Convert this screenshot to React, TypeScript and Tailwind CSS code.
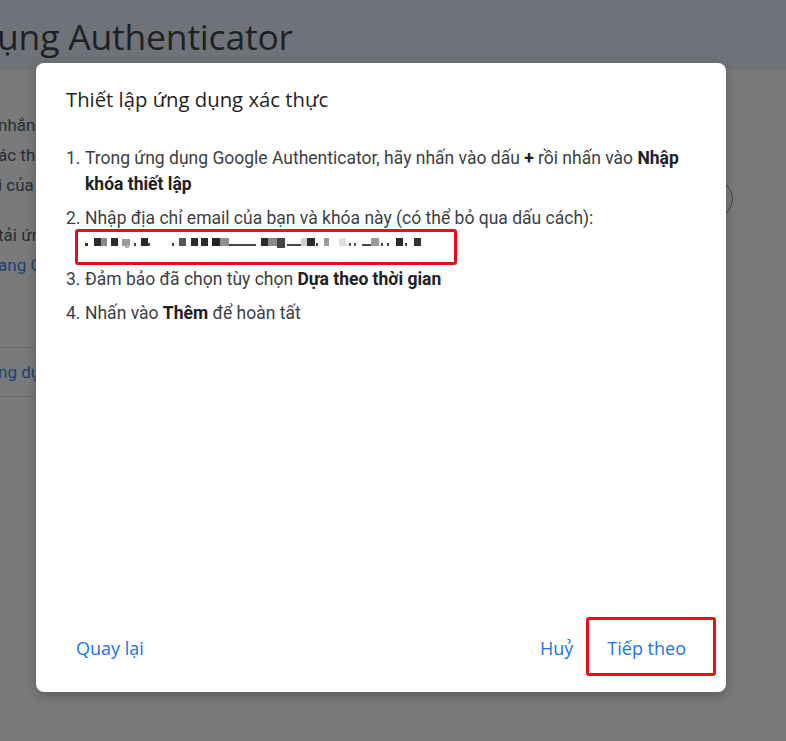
import React from 'react'

const keyBlocks: [number, number, number, number, string][] = [
  [0, 10, 3, 3, '#333'],
  [9, 5, 7, 8, '#2b2b2b'],
  [16, 5, 6, 8, '#8a8a8a'],
  [26, 5, 7, 8, '#2b2b2b'],
  [37, 6, 8, 7, '#9a9a9a'],
  [40, 12, 4, 3, '#b0b0b0'],
  [49, 10, 2, 3, '#444'],
  [56, 5, 7, 8, '#2b2b2b'],
  [63, 10, 2, 3, '#444'],
  [87, 10, 2, 3, '#444'],
  [94, 5, 7, 8, '#555'],
  [106, 5, 7, 8, '#2b2b2b'],
  [116, 5, 7, 8, '#2b2b2b'],
  [127, 5, 8, 8, '#222'],
  [135, 5, 9, 8, '#8f8f8f'],
  [144, 11, 27, 2, '#444'],
  [176, 5, 7, 8, '#2b2b2b'],
  [183, 5, 9, 8, '#8a8a8a'],
  [192, 5, 8, 10, '#444'],
  [202, 11, 14, 2, '#444'],
  [216, 5, 6, 8, '#d0d0d0'],
  [222, 5, 8, 8, '#2b2b2b'],
  [231, 10, 2, 3, '#444'],
  [239, 5, 5, 8, '#9a9a9a'],
  [254, 5, 7, 8, '#e0e0e0'],
  [264, 10, 2, 3, '#555'],
  [269, 10, 2, 3, '#555'],
  [277, 11, 9, 2, '#444'],
  [286, 5, 8, 8, '#9a9a9a'],
  [296, 10, 2, 3, '#444'],
  [302, 10, 2, 3, '#444'],
  [311, 5, 7, 8, '#2b2b2b'],
  [320, 10, 2, 3, '#444'],
  [329, 5, 7, 8, '#333'],
]

function BackgroundPage() {
  return (
    <div className="flex h-full flex-col bg-white text-[#202124]">
      <div className="flex h-[70px] items-center bg-[#e6ecf8]">
        <h1 className="-ml-[3px] mt-[3px] whitespace-nowrap font-['Open_Sans',sans-serif] text-[35.5px] leading-none tracking-[-0.2px] text-[#1f1f1f]">
          ụng Authenticator
        </h1>
      </div>
      <div className="flex flex-1">
        <div className="-ml-[2px] flex w-[700px] flex-col pt-[40px] text-[17px] leading-[30px] text-[#3c4043]">
          <p className="whitespace-nowrap">nhắn văn bản, bạn có thể nhận mã</p>
          <p className="whitespace-nowrap">ác thực từ ứng dụng Authenticator</p>
          <p className="whitespace-nowrap">i của bạn</p>
          <p className="mt-[20px] whitespace-nowrap">tải ứng dụng Google Authenticator</p>
          <p className="whitespace-nowrap text-[#1a73e8]">ang Google Play hoặc App Store</p>
          <div className="mt-[67px] flex h-[50px] items-center border-y border-[#dadce0]">
            <span className="whitespace-nowrap text-[#1a73e8]">ng dụng Authenticator</span>
          </div>
        </div>
        <div className="flex flex-1 justify-end pr-[53px] pt-[110px]">
          <div className="h-[38px] w-[120px] rounded-full border border-[#747775]" />
        </div>
      </div>
    </div>
  )
}

export default function App() {
  return (
    <div className="relative h-[741px] w-[786px] overflow-hidden font-['Roboto',sans-serif]">
      <BackgroundPage />

      {/* scrim + dialog */}
      <div className="absolute inset-0 bg-[#202124]/60 pl-[36px] pt-[63px]">
        <div className="flex h-[629px] w-[690px] flex-col rounded-[8px] bg-white shadow-[0_4px_12px_rgba(0,0,0,0.25)]">
          <div className="px-[30px] pt-[23px]">
            <h2 className="font-['Open_Sans',sans-serif] text-[20.3px] leading-[26px] text-[#1f1f1f]">
              Thiết lập ứng dụng xác thực
            </h2>

            <div className="mt-[33px] flex flex-col gap-[8px] text-[17.5px] leading-[26px] text-[#3c4043]">
              <div className="flex">
                <span className="w-[19px] shrink-0">1.</span>
                <span>
                  Trong ứng dụng Google Authenticator, hãy nhấn vào dấu <b className="font-bold text-[#202124]">+</b> rồi nhấn vào{' '}
                  <b className="font-bold text-[#202124]">Nhập khóa thiết lập</b>
                </span>
              </div>
              <div className="flex">
                <span className="w-[19px] shrink-0">2.</span>
                <div className="flex flex-col">
                  <span>Nhập địa chỉ email của bạn và khóa này (có thể bỏ qua dấu cách):</span>
                  <div className="relative h-[27px]">
                    <svg width="340" height="16" viewBox="0 0 340 16" className="mt-[4px] block">
                      {keyBlocks.map(([x, y, w, h, c], i) => (
                        <rect key={i} x={x} y={y - 2} width={w} height={h} fill={c} />
                      ))}
                    </svg>
                    <div className="absolute -left-[10px] -top-[2px] h-[36px] w-[382px] rounded-[3px] border-[3px] border-[#e5101c]" />
                  </div>
                </div>
              </div>
              <div className="flex">
                <span className="w-[19px] shrink-0">3.</span>
                <span>
                  Đảm bảo đã chọn tùy chọn <b className="font-bold text-[#202124]">Dựa theo thời gian</b>
                </span>
              </div>
              <div className="flex">
                <span className="w-[19px] shrink-0">4.</span>
                <span>
                  Nhấn vào <b className="font-bold text-[#202124]">Thêm</b> để hoàn tất
                </span>
              </div>
            </div>
          </div>

          <div className="mt-auto flex items-center justify-between px-[24px] pb-[24px] font-['Open_Sans',sans-serif] text-[18px] font-medium text-[#1a73e8]">
            <button className="h-[40px] rounded-full px-[16px]">Quay lại</button>
            <div className="flex items-center gap-[2px]">
              <button className="h-[40px] rounded-full px-[16px]">Huỷ</button>
              <div className="relative">
                <button className="h-[40px] rounded-full px-[16px]">Tiếp theo</button>
                <div className="absolute -bottom-[8px] -left-[5px] -right-[14px] -top-[11px] rounded-[3px] border-[3px] border-[#e5101c]" />
              </div>
            </div>
          </div>
        </div>
      </div>
    </div>
  )
}
